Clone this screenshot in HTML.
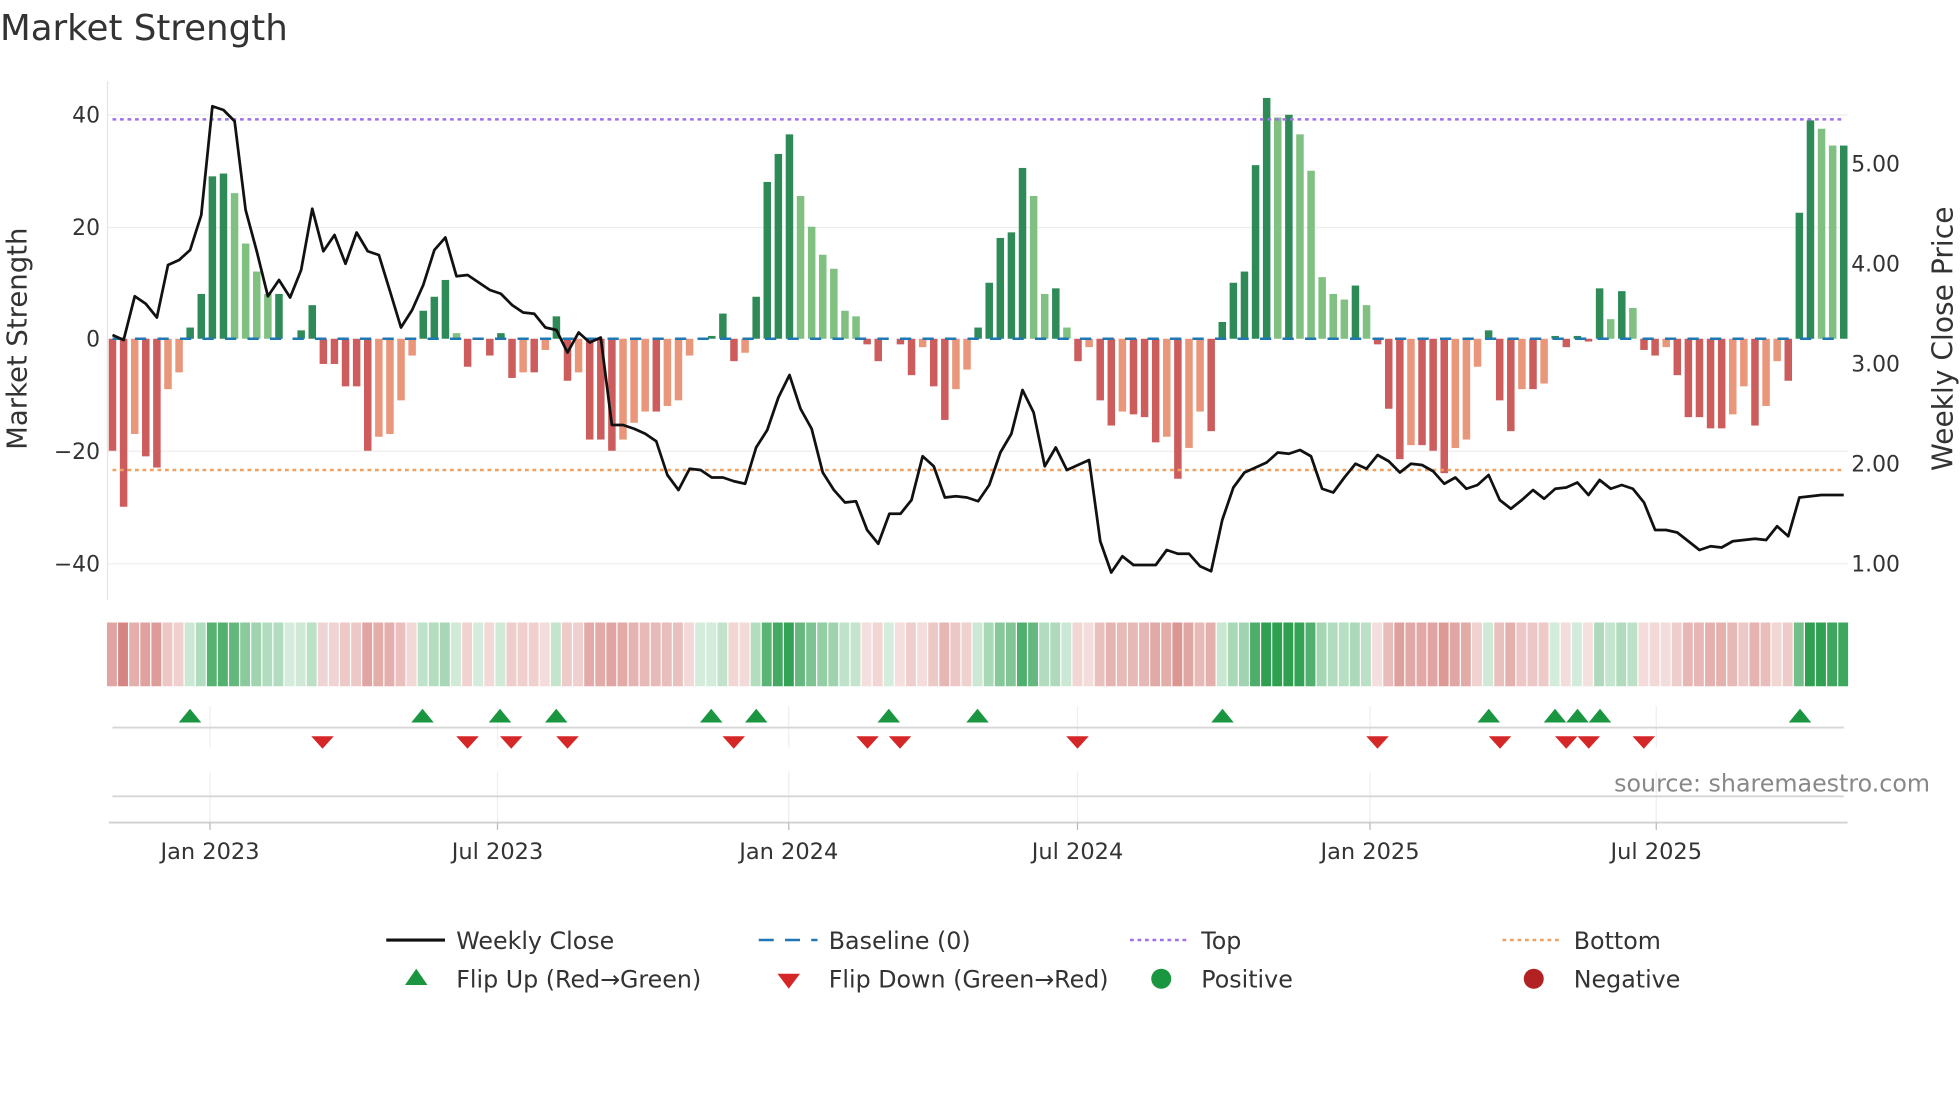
<!DOCTYPE html>
<html><head><meta charset="utf-8"><style>
html,body{margin:0;padding:0;background:#fff;}
svg{display:block;font-family:"DejaVu Sans","Liberation Sans",sans-serif;}
</style></head><body>
<svg id="s" width="1960" height="1102" viewBox="0 0 1568 881.6" xmlns="http://www.w3.org/2000/svg">
<text x="0" y="32" font-size="28.5" fill="#333">Market Strength</text>
<g stroke="#eee" stroke-width="1">
<line x1="86" y1="92" x2="1478" y2="92"/><line x1="86" y1="182" x2="1478" y2="182"/><line x1="86" y1="361" x2="1478" y2="361"/><line x1="86" y1="451" x2="1478" y2="451"/>
</g>
<line x1="86" y1="65" x2="86" y2="480" stroke="#e4e4e4"/>
<g font-size="17.5" fill="#333" text-anchor="end">
<text x="80" y="98">40</text><text x="80" y="188">20</text><text x="80" y="277">0</text><text x="80" y="367">−20</text><text x="80" y="457">−40</text>
</g>
<g font-size="17.5" fill="#333">
<text x="1481" y="137">5.00</text><text x="1481" y="217">4.00</text><text x="1481" y="297">3.00</text><text x="1481" y="377">2.00</text><text x="1481" y="457">1.00</text>
</g>
<text transform="translate(21,271) rotate(-90)" font-size="22" fill="#333" text-anchor="middle">Market Strength</text>
<text transform="translate(1562,271) rotate(-90)" font-size="22.5" fill="#333" text-anchor="middle">Weekly Close Price</text>
<g id="bars"></g>
<line x1="90" y1="271" x2="1476" y2="271" stroke="#1f77b4" stroke-width="2" stroke-dasharray="9,9"/>
<line x1="90" y1="95.5" x2="1476" y2="95.5" stroke="#a070e8" stroke-width="2" stroke-dasharray="3,3"/>
<line x1="90" y1="376" x2="1476" y2="376" stroke="#f0a060" stroke-width="2" stroke-dasharray="3,3"/>
<polyline id="price" fill="none" stroke="#111" stroke-width="2.2" stroke-linejoin="round"/>
<g id="heat"></g>
<g stroke="#eceff3" stroke-width="1">
<line x1="168" y1="565" x2="168" y2="598"/><line x1="398" y1="565" x2="398" y2="598"/><line x1="631" y1="565" x2="631" y2="598"/><line x1="862" y1="565" x2="862" y2="598"/><line x1="1096" y1="565" x2="1096" y2="598"/><line x1="1325" y1="565" x2="1325" y2="598"/>
<line x1="168" y1="617" x2="168" y2="658"/><line x1="398" y1="617" x2="398" y2="658"/><line x1="631" y1="617" x2="631" y2="658"/><line x1="862" y1="617" x2="862" y2="658"/><line x1="1096" y1="617" x2="1096" y2="658"/><line x1="1325" y1="617" x2="1325" y2="658"/>
</g>
<line x1="90" y1="582" x2="1475" y2="582" stroke="#d6d6d6" stroke-width="1.5"/>
<line x1="90" y1="637" x2="1475" y2="637" stroke="#d6d6d6" stroke-width="1.5"/>
<line x1="87" y1="658" x2="1478" y2="658" stroke="#d0d0d0" stroke-width="1.5"/>
<g stroke="#bbb"><line x1="168" y1="658" x2="168" y2="664"/><line x1="398" y1="658" x2="398" y2="664"/><line x1="631" y1="658" x2="631" y2="664"/><line x1="862" y1="658" x2="862" y2="664"/><line x1="1096" y1="658" x2="1096" y2="664"/><line x1="1325" y1="658" x2="1325" y2="664"/></g>
<g id="marks"></g>
<text x="1544" y="633" font-size="19" fill="#888" text-anchor="end">source: sharemaestro.com</text>
<g font-size="18" fill="#333" text-anchor="middle">
<text x="168" y="687">Jan 2023</text><text x="398" y="687">Jul 2023</text><text x="631" y="687">Jan 2024</text><text x="862" y="687">Jul 2024</text><text x="1096" y="687">Jan 2025</text><text x="1325" y="687">Jul 2025</text>
</g>
<g font-size="19" fill="#333">
<line x1="309" y1="752" x2="356" y2="752" stroke="#111" stroke-width="2.5"/><text x="365" y="759">Weekly Close</text>
<line x1="607" y1="752" x2="654" y2="752" stroke="#1f77b4" stroke-width="2" stroke-dasharray="12,9"/><text x="663" y="759">Baseline (0)</text>
<line x1="904" y1="752" x2="951" y2="752" stroke="#a070e8" stroke-width="2" stroke-dasharray="3,3"/><text x="961" y="759">Top</text>
<line x1="1202" y1="752" x2="1249" y2="752" stroke="#f0a060" stroke-width="2" stroke-dasharray="3,3"/><text x="1259" y="759">Bottom</text>
<polygon points="324,788 342,788 333,775" fill="#1a9641"/><text x="365" y="790">Flip Up (Red→Green)</text>
<polygon points="622,779 640,779 631,791" fill="#d62728"/><text x="663" y="790">Flip Down (Green→Red)</text>
<circle cx="929" cy="783" r="8" fill="#1a9641"/><text x="961" y="790">Positive</text>
<circle cx="1227" cy="783" r="8" fill="#b22222"/><text x="1259" y="790">Negative</text>
</g>
</svg>
<script>
var V=[-20,-30,-17,-21,-23,-9,-6,2,8,29,29.5,26,17,12,8,8,0,1.5,6,-4.5,-4.5,-8.5,-8.5,-20,-17.5,-17,-11,-3,5,7.5,10.5,1,-5,0,-3,1,-7,-6,-6,-2,4,-7.5,-6,-18,-18,-20,-18,-15,-13,-13,-12,-11,-3,0,0.5,4.5,-4,-2.5,7.5,28,33,36.5,25.5,20,15,12.5,5,4,-1,-4,0,-1,-6.5,-1.5,-8.5,-14.5,-9,-5.5,2,10,18,19,30.5,25.5,8,9,2,-4,-1.5,-11,-15.5,-13,-13.5,-14,-18.5,-17.5,-25,-19.5,-13,-16.5,3,10,12,31,43,39.5,40,36.5,30,11,8,7,9.5,6,-1,-12.5,-21.5,-19,-19,-20,-24,-19.5,-18,-5,1.5,-11,-16.5,-9,-9,-8,0.5,-1.5,0.5,-0.5,9,3.5,8.5,5.5,-2,-3,-1.5,-6.5,-14,-14,-16,-16,-13.5,-8.5,-15.5,-12,-4,-7.5,22.5,39,37.5,34.5,34.5];
var P=[268,272,237,243,254,212,208,200,172,85,88,97,168,201,237,224,238,216,167,201,188,211,186,201,204,233,262,248,228,200,190,221,220,226,232,235,244,250,251,262,264,282,266,274,270,340,340,343,347,353,380,392,375,376,382,382,385,387,358,344,318,300,327,343,378,392,402,401,424,435,411,411,400,365,373,398,397,398,401,388,362,347,312,330,373,358,376,372,368,433,458,445,452,452,452,440,443,443,453,457,416,390,378,374,370,362,363,360,365,391,394,382,371,375,364,369,378,371,372,377,387,382,391,388,380,400,407,400,392,399,391,390,386,396,384,391,388,391,402,424,424,426,433,440,437,438,433,432,431,432,421,429,398,397,396,396,396];
var ns="http://www.w3.org/2000/svg",dx=(1475-90)/(V.length-1);
function el(p,t,a){var e=document.createElementNS(ns,t);for(var k in a)e.setAttribute(k,a[k]);document.getElementById(p).appendChild(e);return e;}
function mix(c,t){return "rgb("+c.map(function(v){return Math.round(255+(v-255)*t)}).join(",")+")";}
var pts=[];
for(var i=0;i<V.length;i++){var x=90+i*dx,v=V[i],pv=i?V[i-1]:0,c;
 if(v>=0)c=(v>=pv)?"#2e8b57":"#80c080";else c=(v<=pv)?"#cd5c5c":"#e9967a";
 var y0=271,y1=271-v*4.48;
 if(Math.abs(v)>0.01)el("bars","rect",{x:x-3,y:Math.min(y0,y1),width:6,height:Math.abs(y1-y0),fill:c});
 var t=Math.min(1,Math.abs(v)/38)*0.8+0.2;
 el("heat","rect",{x:x-4.4,y:498,width:7.9,height:51,fill:v>=0?mix([46,160,80],t):mix([205,110,105],t)});
 pts.push(x.toFixed(1)+","+(P[i]||396));}
document.getElementById("price").setAttribute("points",pts.join(" "));
[152,338,400,445,569,605,711,782,978,1191,1244,1262,1280,1440].forEach(function(x){el("marks","polygon",{points:(x-9)+",578 "+(x+9)+",578 "+x+",567",fill:"#1a9641"});});
[258,374,409,454,587,694,720,862,1102,1200,1253,1271,1315].forEach(function(x){el("marks","polygon",{points:(x-9)+",589 "+(x+9)+",589 "+x+",599",fill:"#d62728"});});
</script>
</body></html>
